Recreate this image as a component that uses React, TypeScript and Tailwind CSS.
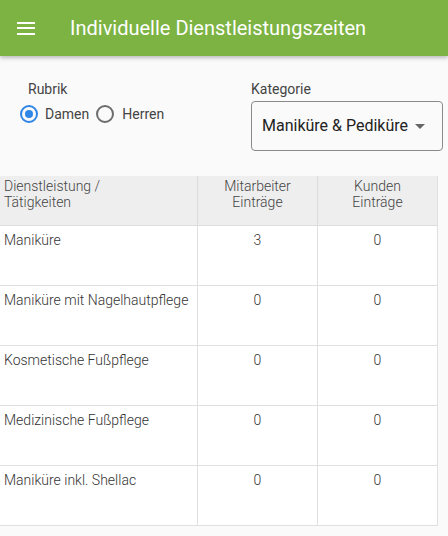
import React from "react";

const rows = [
  { name: "Maniküre", m: "3", k: "0" },
  { name: "Maniküre mit Nagelhautpflege", m: "0", k: "0" },
  { name: "Kosmetische Fußpflege", m: "0", k: "0" },
  { name: "Medizinische Fußpflege", m: "0", k: "0" },
  { name: "Maniküre inkl. Shellac", m: "0", k: "0" },
];

export default function App() {
  return (
    <div
      className="w-[448px] h-[536px] bg-[#fafafa] overflow-hidden"
      style={{ fontFamily: "Roboto, 'Noto Sans', sans-serif" }}
    >
      <header className="h-14 bg-[#7cb342] flex items-center shadow-[0_2px_4px_rgba(0,0,0,0.25)] relative z-10">
        <div className="w-6 h-6 ml-[14px] flex flex-col justify-center items-center gap-[3.5px]">
          <span className="block w-[18px] h-[2px] bg-white" />
          <span className="block w-[18px] h-[2px] bg-white" />
          <span className="block w-[18px] h-[2px] bg-white" />
        </div>
        <h1 className="ml-[32px] text-white text-[20px] leading-none font-normal">
          Individuelle Dienstleistungszeiten
        </h1>
      </header>

      <div className="flex pt-[23px]">
        <div className="w-[251px] pl-[20px]">
          <div className="pl-[8px] h-5 text-[14px] leading-5 text-[#444]">Rubrik</div>
          <div className="flex items-center h-5 mt-[5px] text-[14px] text-[#444]">
            <span className="w-[18px] h-[18px] rounded-full border-2 border-[#2f86e6] flex items-center justify-center">
              <span className="w-[8px] h-[8px] rounded-full bg-[#2f86e6]" />
            </span>
            <span className="ml-[7px]">Damen</span>
            <span className="ml-[7px] w-[18px] h-[18px] rounded-full border-2 border-[#6d6d6d]" />
            <span className="ml-[8px]">Herren</span>
          </div>
        </div>
        <div>
          <div className="h-5 text-[14px] leading-5 text-[#444]">Kategorie</div>
          <div className="mt-[2px] w-[192px] h-[50px] border border-[#8a8a8a] rounded-[4px] flex items-center pl-[10px] pr-[17px] bg-[#fafafa]">
            <span className="text-[16px] text-[#222] flex-1">Maniküre &amp; Pediküre</span>
            <svg width="10" height="5" viewBox="0 0 10 5">
              <path d="M0 0 L10 0 L5 5 Z" fill="#666" />
            </svg>
          </div>
        </div>
      </div>

      <div className="mt-[25px] w-[438px] border-r border-[#e0e0e0]">
        <div className="grid grid-cols-[198px_120px_119px] bg-[#eeeeee] border-b border-[#dcdcdc] h-[50px] text-[14px] leading-[16px] font-light text-[#444]">
          <div className="border-r border-[#dcdcdc] px-[4px] pt-[2px]">
            Dienstleistung /<br />Tätigkeiten
          </div>
          <div className="border-r border-[#dcdcdc] pt-[2px] text-center">
            Mitarbeiter<br />Einträge
          </div>
          <div className="pt-[2px] text-center">
            Kunden<br />Einträge
          </div>
        </div>
        {rows.map((r) => (
          <div
            key={r.name}
            className="grid grid-cols-[198px_120px_119px] bg-white border-b border-[#e0e0e0] h-[60px] text-[14px] leading-5 font-light text-[#333]"
          >
            <div className="border-r border-[#e0e0e0] px-[4px] pt-[4px]">{r.name}</div>
            <div className="border-r border-[#e0e0e0] pt-[4px] text-center">{r.m}</div>
            <div className="pt-[4px] text-center">{r.k}</div>
          </div>
        ))}
      </div>
    </div>
  );
}
